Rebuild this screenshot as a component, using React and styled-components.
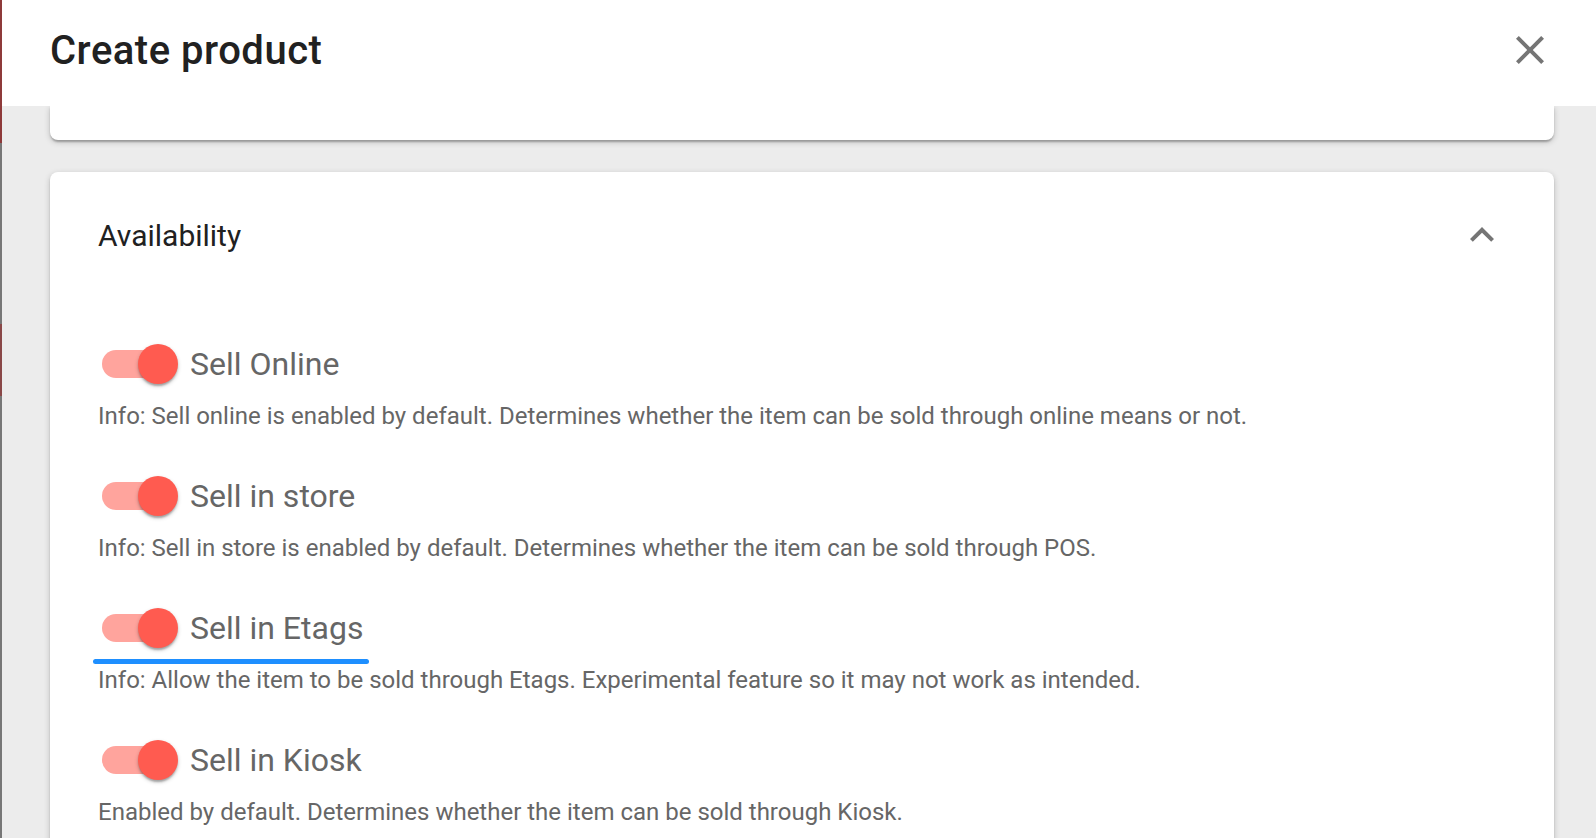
import React from "react";
import styled, { createGlobalStyle } from "styled-components";

const GlobalStyle = createGlobalStyle`
  html, body {
    margin: 0;
    padding: 0;
    background: #ececec;
    font-family: Roboto, "Noto Sans", "Liberation Sans", sans-serif;
  }
`;

const Frame = styled.div`
  display: flex;
  width: 1596px;
  height: 838px;
  overflow: hidden;
`;

/* sliver of the page behind the dialog */
const BackdropStrip = styled.div`
  width: 2px;
  flex-shrink: 0;
  background: linear-gradient(
    to bottom,
    #8e3a3a 0px,
    #8e3a3a 143px,
    #777 143px,
    #777 324px,
    #8a4848 324px,
    #8a4848 396px,
    #777 396px
  );
`;

const Dialog = styled.div`
  flex: 1;
  display: flex;
  flex-direction: column;
  min-width: 0;
`;

const Header = styled.header`
  height: 106px;
  flex-shrink: 0;
  display: flex;
  align-items: center;
  justify-content: space-between;
  padding: 0 42px 6px 48px;
  box-sizing: border-box;
  background: #fff;
  position: relative;
  z-index: 2;
`;

const Title = styled.h2`
  margin: 0;
  font-size: 40px;
  font-weight: 500;
  color: #212121;
  letter-spacing: 0.5px;
`;

const IconButton = styled.button`
  width: 48px;
  height: 48px;
  padding: 0;
  border: 0;
  background: none;
  display: flex;
  align-items: center;
  justify-content: center;
  cursor: pointer;

  svg {
    width: 48px;
    height: 48px;
    fill: #757575;
  }
`;

const Body = styled.main`
  flex: 1;
  overflow: hidden;
  background: #ececec;
  padding: 0 42px 0 48px;
  display: flex;
  flex-direction: column;
  gap: 32px;
`;

const Card = styled.section`
  background: #fff;
  border-radius: ${({ $clipped }) => ($clipped ? "0 0 8px 8px" : "8px")};
  box-shadow: 0 2px 6px rgba(0, 0, 0, 0.2), 0 2px 2px rgba(0, 0, 0, 0.14),
    0 4px 2px -2px rgba(0, 0, 0, 0.12);
  height: ${({ $height }) => ($height ? `${$height}px` : "auto")};
  flex-shrink: 0;
`;

const Summary = styled.div`
  height: 126px;
  display: flex;
  align-items: center;
  justify-content: space-between;
  padding: 0 48px 2px;
`;

const Heading = styled.h3`
  margin: 0;
  font-size: 30px;
  font-weight: 400;
  color: #212121;
`;

const Details = styled.div`
  padding: 26px 48px 48px;
  display: flex;
  flex-direction: column;
  gap: 26px;
`;

const Item = styled.div`
  display: flex;
  flex-direction: column;
`;

const SwitchRow = styled.label`
  position: relative;
  height: 76px;
  display: flex;
  align-items: center;
  margin-left: -20px;

  &::after {
    content: "";
    display: ${({ $highlight }) => ($highlight ? "block" : "none")};
    position: absolute;
    left: 15px;
    top: 69px;
    width: 276px;
    height: 5px;
    border-radius: 3px;
    background: #1e8fff;
  }
`;

const SwitchRoot = styled.span`
  position: relative;
  width: 112px;
  height: 76px;
  flex-shrink: 0;
`;

const Track = styled.span`
  position: absolute;
  left: 24px;
  top: 24px;
  width: 68px;
  height: 28px;
  border-radius: 14px;
  background: ${({ $on }) => ($on ? "#ffa49d" : "#bdbdbd")};
`;

const Thumb = styled.span`
  position: absolute;
  top: 18px;
  left: ${({ $on }) => ($on ? "60px" : "18px")};
  width: 40px;
  height: 40px;
  border-radius: 50%;
  background: ${({ $on }) => ($on ? "#ff5b50" : "#fafafa")};
  box-shadow: 0 2px 4px rgba(0, 0, 0, 0.2), 0 2px 2px rgba(0, 0, 0, 0.14),
    0 4px 2px -2px rgba(0, 0, 0, 0.12);
`;

const Label = styled.span`
  font-size: 32px;
  color: #666;
`;

const Info = styled.p`
  margin: -2px 0 0;
  font-size: 24px;
  line-height: 32px;
  color: #666;
`;

const CloseIcon = () => (
  <svg viewBox="0 0 24 24">
    <path d="M19 6.41L17.59 5 12 10.59 6.41 5 5 6.41 10.59 12 5 17.59 6.41 19 12 13.41 17.59 19 19 17.59 13.41 12z" />
  </svg>
);

const ExpandLessIcon = () => (
  <svg viewBox="0 0 24 24">
    <path d="M12 8l-6 6 1.41 1.41L12 10.83l4.59 4.58L18 14z" />
  </svg>
);

const channels = [
  {
    label: "Sell Online",
    info: "Info: Sell online is enabled by default. Determines whether the item can be sold through online means or not.",
  },
  {
    label: "Sell in store",
    info: "Info: Sell in store is enabled by default. Determines whether the item can be sold through POS.",
  },
  {
    label: "Sell in Etags",
    info: "Info: Allow the item to be sold through Etags. Experimental feature so it may not work as intended.",
    highlight: true,
  },
  {
    label: "Sell in Kiosk",
    info: "Enabled by default. Determines whether the item can be sold through Kiosk.",
  },
];

const Toggle = ({ on = true }) => (
  <SwitchRoot>
    <Track $on={on} />
    <Thumb $on={on} />
  </SwitchRoot>
);

export default function App() {
  return (
    <>
      <GlobalStyle />
      <Frame>
        <BackdropStrip />
        <Dialog>
          <Header>
            <Title>Create product</Title>
            <IconButton aria-label="close">
              <CloseIcon />
            </IconButton>
          </Header>
          <Body>
            <Card $clipped $height={34} />
            <Card>
              <Summary>
                <Heading>Availability</Heading>
                <IconButton aria-label="collapse">
                  <ExpandLessIcon />
                </IconButton>
              </Summary>
              <Details>
                {channels.map((c) => (
                  <Item key={c.label}>
                    <SwitchRow $highlight={c.highlight}>
                      <Toggle on />
                      <Label>{c.label}</Label>
                    </SwitchRow>
                    <Info>{c.info}</Info>
                  </Item>
                ))}
              </Details>
            </Card>
          </Body>
        </Dialog>
      </Frame>
    </>
  );
}
